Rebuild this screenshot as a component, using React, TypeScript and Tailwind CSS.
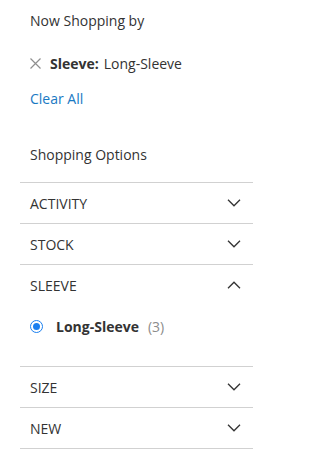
const filters = [
  { name: 'ACTIVITY', open: false },
  { name: 'STOCK', open: false },
  { name: 'SLEEVE', open: true },
  { name: 'SIZE', open: false },
  { name: 'NEW', open: false },
];

function Chevron({ up }: { up: boolean }) {
  return (
    <svg width="14" height="8" viewBox="0 0 14 8" fill="none" className="text-[#333]">
      <polyline
        points={up ? '1,7.2 7,1.2 13,7.2' : '1,0.8 7,6.8 13,0.8'}
        stroke="currentColor"
        strokeWidth="1.3"
      />
    </svg>
  );
}

export default function App() {
  return (
    <div className="w-[300px] h-[468px] bg-white text-[#333] text-[14px] font-['Open_Sans',sans-serif]">
      <div className="pl-[30px] pt-[10px]">
        <div className="h-[22px] leading-[22px]">Now Shopping by</div>
        <div className="mt-[20px] h-[22px] flex items-center">
          <svg width="11" height="11" viewBox="0 0 11 11" fill="none" className="text-[#8f8f8f]">
            <path d="M0.5 0.5 L10.5 10.5 M10.5 0.5 L0.5 10.5" stroke="currentColor" strokeWidth="1.2" />
          </svg>
          <span className="ml-[9px] font-bold">Sleeve:</span>
          <span className="ml-[5px]">Long-Sleeve</span>
        </div>
        <div className="mt-[14px] h-[22px] leading-[22px] text-[#1979c3]">Clear All</div>
        <div className="mt-[34px] h-[22px] leading-[22px]">Shopping Options</div>
      </div>
      <div className="ml-[20px] w-[233px] mt-[16px] border-t border-[#d1d1d1]">
        {filters.map((f) => (
          <div key={f.name} className="border-b border-[#d1d1d1]">
            <div className="h-[40px] flex items-center justify-between pl-[10px] pr-[12px]">
              <span>{f.name}</span>
              <Chevron up={f.open} />
            </div>
            {f.open && (
              <div className="h-[61px] pl-[10px] pt-[10px]">
                <div className="flex items-center h-[22px]">
                  <span className="w-[13px] h-[13px] rounded-full border-[1.5px] border-[#1a7ff0] flex items-center justify-center">
                    <span className="w-[7px] h-[7px] rounded-full bg-[#1a7ff0]" />
                  </span>
                  <span className="ml-[13px] font-bold">Long-Sleeve</span>
                  <span className="ml-[9px] text-[#8c8c8c]">(3)</span>
                </div>
              </div>
            )}
          </div>
        ))}
      </div>
    </div>
  );
}
